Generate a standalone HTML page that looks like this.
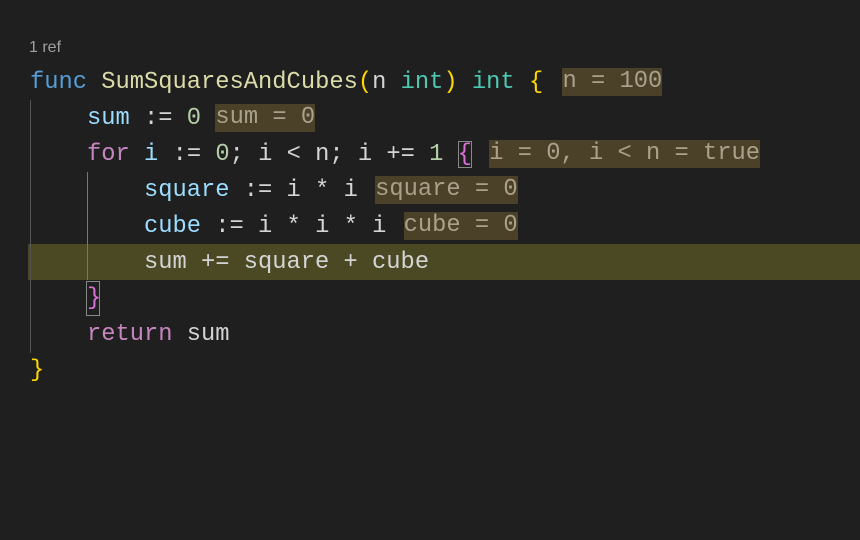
<!DOCTYPE html>
<html><head><style>
html,body{margin:0;background:#1f1f1f;width:860px;height:540px;overflow:hidden}
body{position:relative;font-family:"Liberation Mono","DejaVu Sans Mono",monospace;font-size:23.75px;color:#d4d4d4}
.l{position:absolute;left:30px;height:36px;line-height:36px;white-space:pre}
.k{color:#569cd6}.f{color:#dcdcaa}.y{color:#ffd700}.t{color:#4ec9b0}.v{color:#9cdcfe}.n{color:#b5cea8}.p{color:#c586c0}.m{color:#da70d6}
.h{background:#4a4128;color:#a9a18b;display:inline-block;line-height:28px;height:28px;vertical-align:1px}
.ref{position:absolute;left:29px;top:39px;font-family:"Liberation Sans",sans-serif;font-size:16px;color:#a0a0a0}
.g{position:absolute;width:1px;background:#555}
</style></head><body>
<div class="ref">1 ref</div>
<div style="position:absolute;left:28px;top:244px;width:832px;height:36px;background:#4a4924"></div>
<div class="g" style="left:30px;top:100px;height:253px"></div>
<div class="g" style="left:87px;top:172px;height:108px;background:#777"></div>
<div style="position:absolute;left:86px;top:281px;width:12px;height:33px;border:1px solid #888"></div>
<div class="l" style="top:65px"><span class="k">func</span> <span class="f">SumSquaresAndCubes</span><span class="y">(</span>n <span class="t">int</span><span class="y">)</span> <span class="t">int</span> <span class="y">{</span> <span class="h" style="margin-left:5px">n = 100</span></div>
<div class="l" style="top:101px">    <span class="v">sum</span> := <span class="n">0</span> <span class="h">sum = 0</span></div>
<div class="l" style="top:137px">    <span class="p">for</span> <span class="v">i</span> := <span class="n">0</span>; i &lt; n; i += <span class="n">1</span> <span class="m" style="outline:1px solid #888;outline-offset:-1px">{</span> <span class="h" style="margin-left:3px">i = 0, i &lt; n = true</span></div>
<div class="l" style="top:173px">        <span class="v">square</span> := i * i <span class="h" style="margin-left:3px">square = 0</span></div>
<div class="l" style="top:209px">        <span class="v">cube</span> := i * i * i <span class="h" style="margin-left:3px">cube = 0</span></div>
<div class="l" style="top:245px">        sum += square + cube</div>
<div class="l" style="top:281px">    <span class="m">}</span></div>
<div class="l" style="top:317px">    <span class="p">return</span> sum</div>
<div class="l" style="top:353px"><span class="y">}</span></div>
</body></html>
